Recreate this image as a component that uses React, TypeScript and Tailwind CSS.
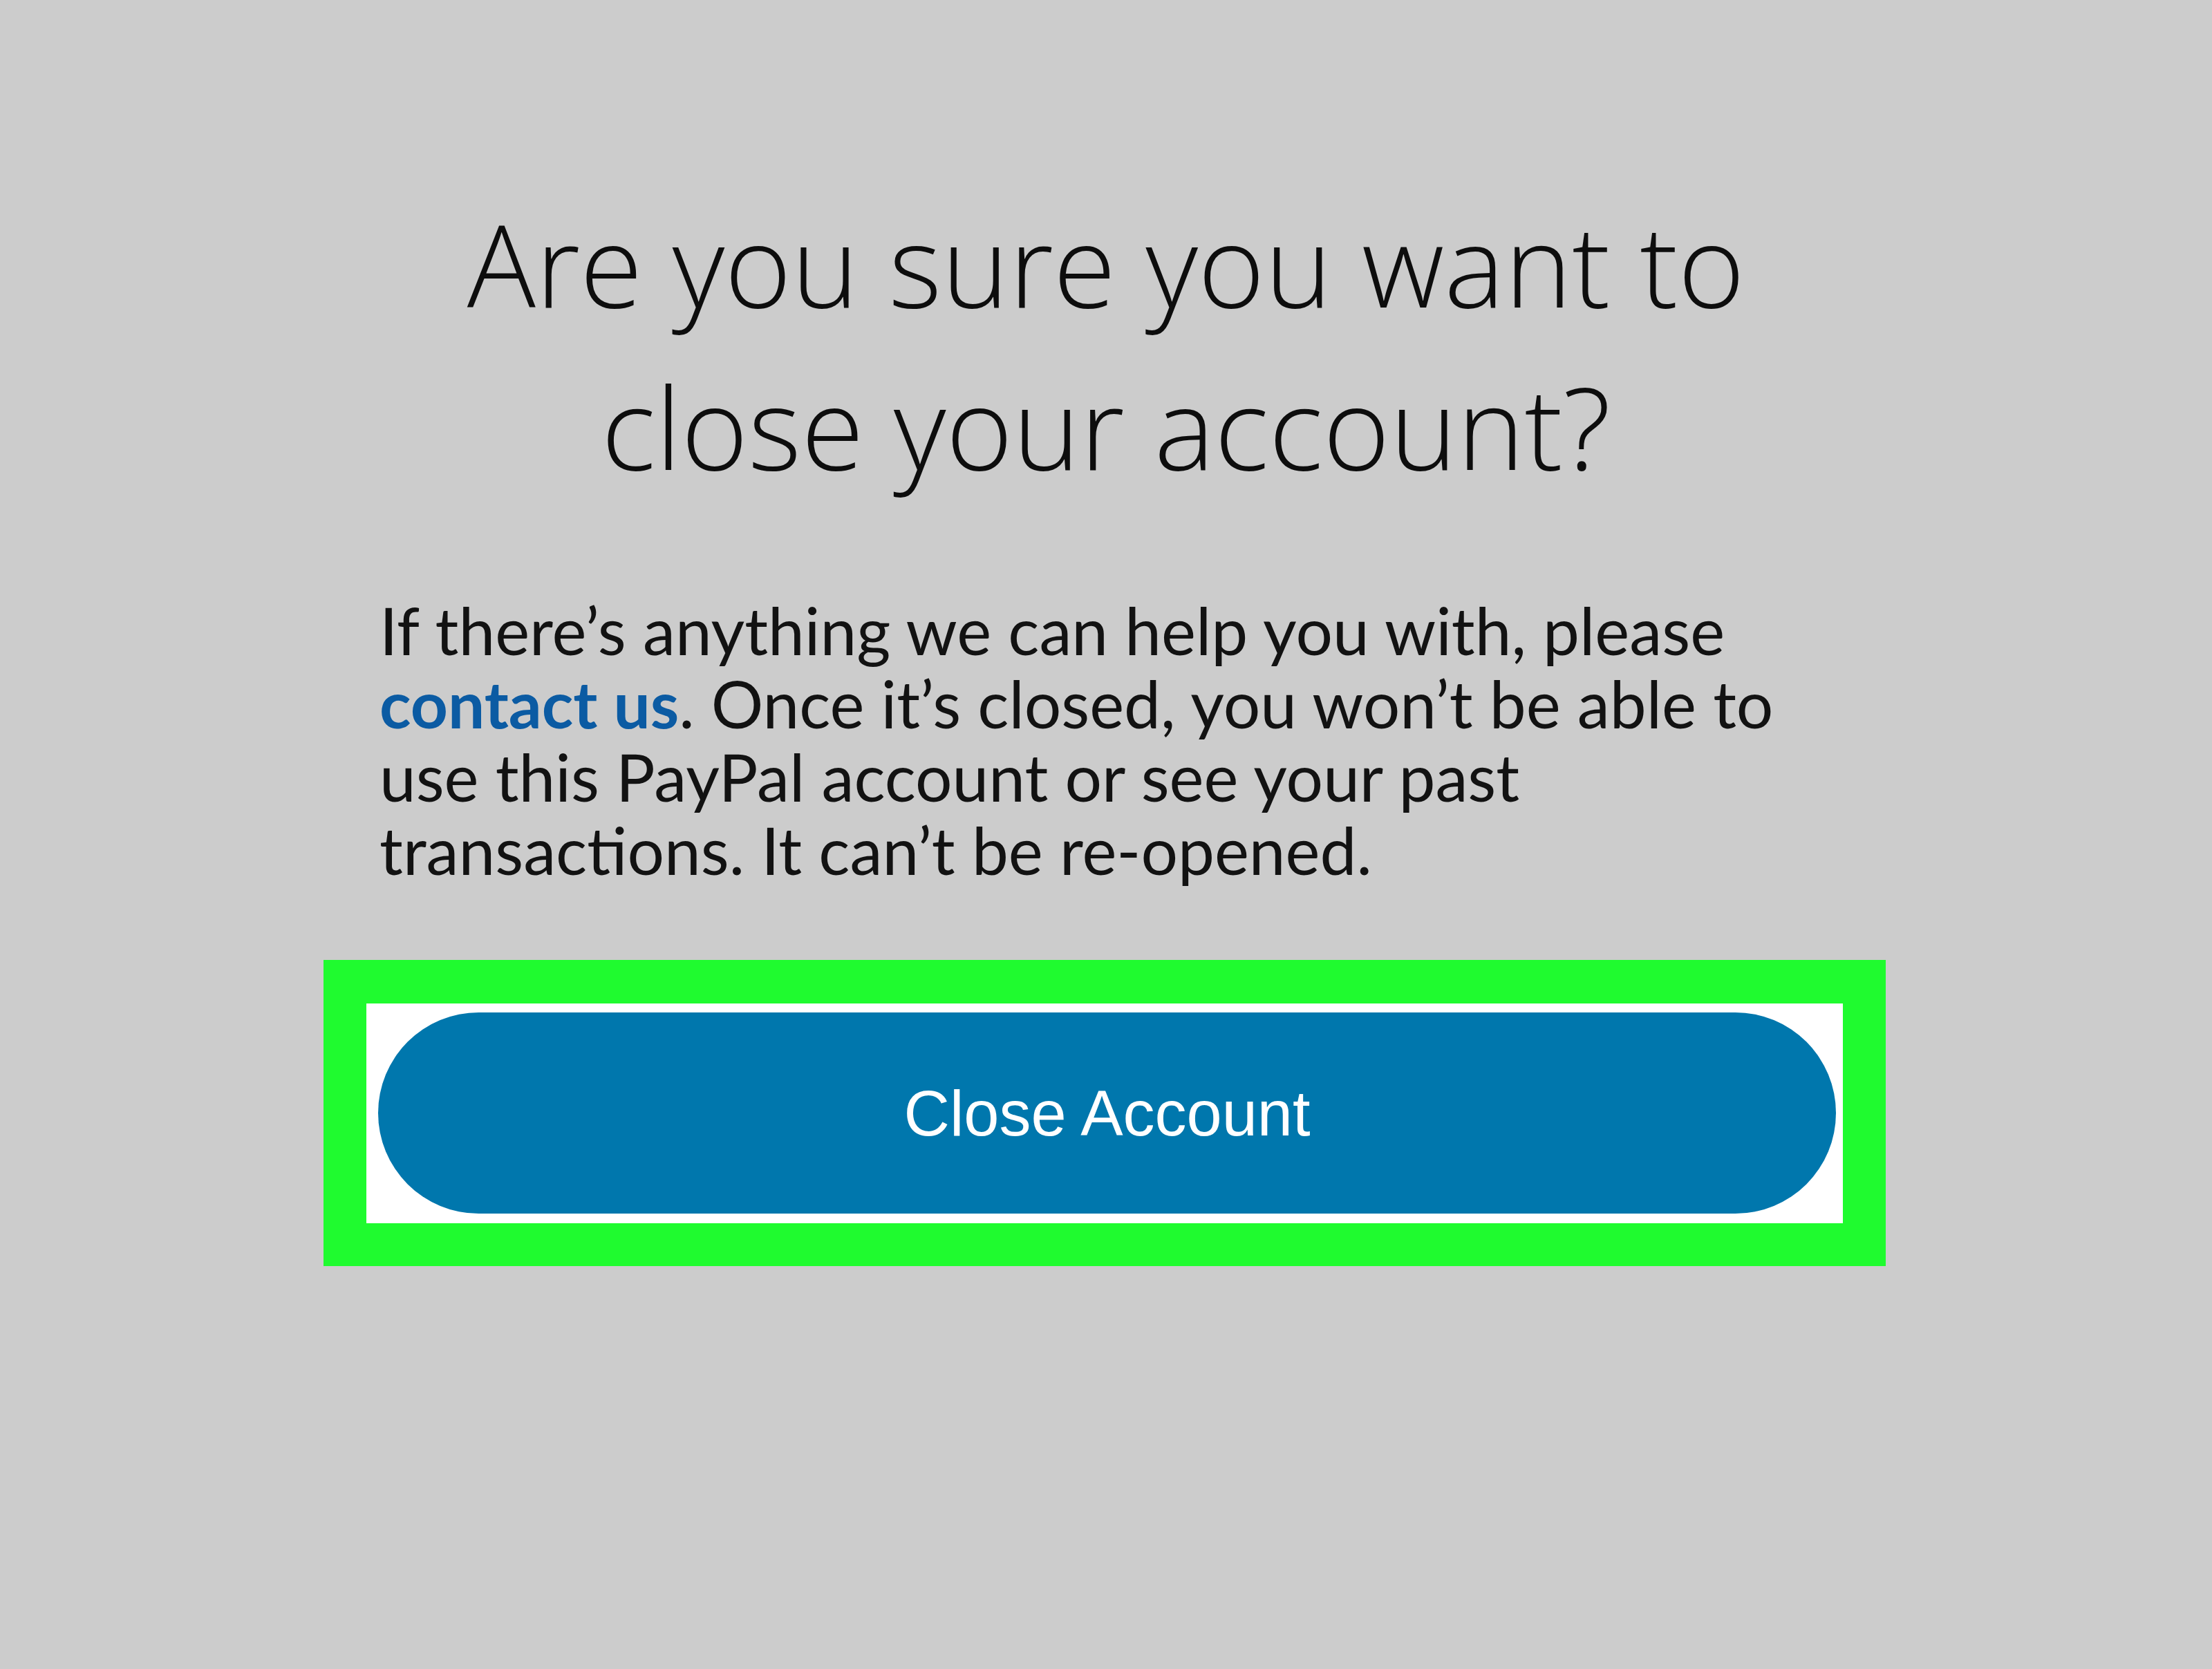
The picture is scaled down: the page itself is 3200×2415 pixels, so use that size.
const headingFont = { fontFamily: '"Open Sans", "Noto Sans", sans-serif' };

export default function App() {
  return (
    <div className="flex h-[2415px] w-[3200px] flex-col bg-[#cccccc]">
      <h1
        className="pt-[264px] text-center text-[165px] leading-[235px] font-light text-[#0d0d0d]"
        style={headingFont}
      >
        Are you sure you want to
        <br />
        close your account?
      </h1>

      <p className="mt-[125px] ml-[549px] font-['Lato',sans-serif] text-[94.5px] leading-[106px] text-[#121212]">
        If there’s anything we can help you with, please
        <br />
        <a href="#" className="font-bold text-[#0b5ba3]">
          contact us
        </a>
        . Once it’s closed, you won’t be able to
        <br />
        use this PayPal account or see your past
        <br />
        transactions. It can’t be re-opened.
      </p>

      <div className="mt-[106px] ml-[468px] w-[2260px] bg-[#1ffb2f] px-[62px] pt-[63px] pb-[62px]">
        <div className="bg-white pt-[13px] pr-[10px] pb-[14px] pl-[17px]">
          <button
            type="button"
            className="flex h-[291px] w-[2109px] items-center justify-center rounded-full bg-[#0077ad] font-['Liberation_Sans',Arial,sans-serif] text-[92px] text-white"
          >
            Close Account
          </button>
        </div>
      </div>
    </div>
  );
}
